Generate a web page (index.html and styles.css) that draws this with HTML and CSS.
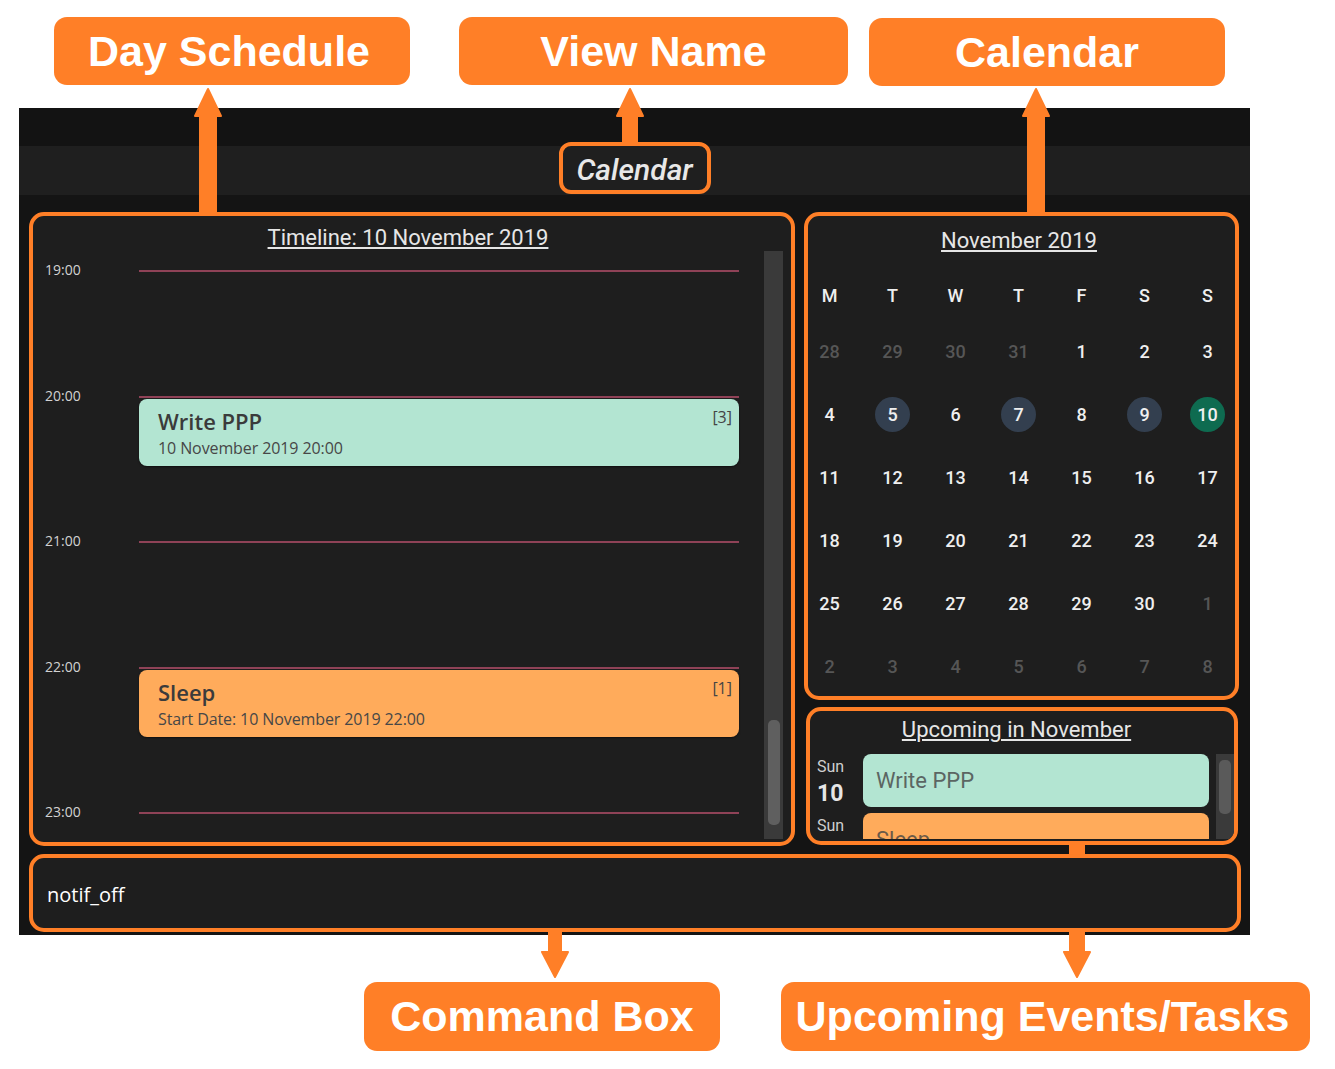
FILE: index.html
```html
<!DOCTYPE html>
<html lang="en">
<head>
<meta charset="utf-8">
<title>Calendar UI annotated</title>
<link rel="stylesheet" href="styles.css">
</head>
<body>
<div class="page">
  <div class="callouts callouts-top">
    <div class="callout c-day">Day Schedule</div>
    <div class="callout c-view">View Name</div>
    <div class="callout c-cal">Calendar</div>
  </div>

  <div class="app">
    <div class="menubar"></div>
    <div class="titlebar"><div class="viewname">Calendar</div></div>
    <div class="main">
      <section class="panel timeline-panel">
        <h2 class="panel-title tl-title">Timeline: 10 November 2019</h2>
        <div class="timeline-body">
          <div class="timeline">
            <div class="hour"><span class="hour-label">19:00</span><span class="hour-line"></span></div>
            <div class="hour after-empty"><span class="hour-label">20:00</span><span class="hour-line"></span></div>
            <div class="event mint">
              <div class="event-head"><span class="event-title">Write PPP</span><span class="event-tag">[3]</span></div>
              <div class="event-sub">10 November 2019 20:00</div>
            </div>
            <div class="hour after-card"><span class="hour-label">21:00</span><span class="hour-line"></span></div>
            <div class="hour after-empty"><span class="hour-label">22:00</span><span class="hour-line"></span></div>
            <div class="event peach">
              <div class="event-head"><span class="event-title">Sleep</span><span class="event-tag">[1]</span></div>
              <div class="event-sub">Start Date: 10 November 2019 22:00</div>
            </div>
            <div class="hour after-card"><span class="hour-label">23:00</span><span class="hour-line"></span></div>
          </div>
          <div class="scrollbar tl-scroll"><div class="thumb"></div></div>
        </div>
      </section>

      <div class="right-col">
        <section class="panel calendar-panel">
          <h2 class="panel-title cal-title">November 2019</h2>
          <div class="month-grid">
            <div class="wd">M</div><div class="wd">T</div><div class="wd">W</div><div class="wd">T</div><div class="wd">F</div><div class="wd">S</div><div class="wd">S</div>
            <div class="day muted">28</div><div class="day muted">29</div><div class="day muted">30</div><div class="day muted">31</div><div class="day">1</div><div class="day">2</div><div class="day">3</div>
            <div class="day">4</div><div class="day has-event">5</div><div class="day">6</div><div class="day has-event">7</div><div class="day">8</div><div class="day has-event">9</div><div class="day today">10</div>
            <div class="day">11</div><div class="day">12</div><div class="day">13</div><div class="day">14</div><div class="day">15</div><div class="day">16</div><div class="day">17</div>
            <div class="day">18</div><div class="day">19</div><div class="day">20</div><div class="day">21</div><div class="day">22</div><div class="day">23</div><div class="day">24</div>
            <div class="day">25</div><div class="day">26</div><div class="day">27</div><div class="day">28</div><div class="day">29</div><div class="day">30</div><div class="day muted">1</div>
            <div class="day muted">2</div><div class="day muted">3</div><div class="day muted">4</div><div class="day muted">5</div><div class="day muted">6</div><div class="day muted">7</div><div class="day muted">8</div>
          </div>
        </section>

        <section class="panel upcoming-panel">
          <h2 class="panel-title up-title">Upcoming in November</h2>
          <div class="up-body">
            <div class="up-list">
              <div class="up-item">
                <div class="up-date"><div class="up-dow">Sun</div><div class="up-num">10</div></div>
                <div class="up-card mint">Write PPP</div>
              </div>
              <div class="up-item">
                <div class="up-date"><div class="up-dow">Sun</div></div>
                <div class="up-card peach">Sleep</div>
              </div>
            </div>
            <div class="scrollbar up-scroll"><div class="thumb"></div></div>
          </div>
        </section>
      </div>
    </div>
    <div class="command">notif_off</div>
  </div>

  <div class="callouts callouts-bottom">
    <div class="callout c-cmd">Command Box</div>
    <div class="callout c-up">Upcoming Events/Tasks</div>
  </div>

  <svg class="arrows" width="1335" height="1069" viewBox="0 0 1335 1069" aria-hidden="true">
    <g fill="#ff7f27" stroke="#ff7f27" stroke-width="2" stroke-linejoin="round">
      <polygon points="208,89 221,116 216,116 216,214 200,214 200,116 195,116"/>
      <polygon points="630,89 643,116 637,116 637,143 623,143 623,116 617,116"/>
      <polygon points="1036,89 1049,116 1044,116 1044,214 1028,214 1028,116 1023,116"/>
      <polygon points="549,930 561,930 561,952 568,952 555,977 542,952 549,952"/>
      <rect x="1070" y="844" width="14" height="12"/>
      <polygon points="1070,930 1084,930 1084,952 1090,952 1077,977 1064,952 1070,952"/>
    </g>
  </svg>
</div>
</body>
</html>
```

FILE: styles.css
```css
html, body {
  margin: 0;
  padding: 0;
  background: #ffffff;
}

.page {
  position: relative;
  width: 1335px;
  height: 1069px;
  overflow: hidden;
}

/* ---------- callout labels ---------- */
.callouts {
  display: flex;
  align-items: flex-start;
}

.callouts-top {
  padding-top: 17px;
  height: 68px;
}

.callouts-bottom {
  margin-top: 47px;
}

.callout {
  box-sizing: border-box;
  height: 68px;
  background: #ff7f27;
  border-radius: 13px;
  color: #ffffff;
  font-family: "Liberation Sans", Arial, sans-serif;
  font-weight: 700;
  font-size: 43px;
  line-height: 68px;
  text-align: center;
  white-space: nowrap;
}

.c-day { margin-left: 54px; width: 356px; padding-right: 6px; }
.c-view { margin-left: 49px; width: 389px; }
.c-cal { margin-left: 21px; width: 356px; margin-top: 1px; }
.c-cmd { margin-left: 364px; width: 356px; height: 69px; line-height: 69px; }
.c-up { margin-left: 61px; width: 529px; height: 69px; line-height: 69px; padding-right: 6px; }

/* ---------- app window ---------- */
.app {
  margin-top: 23px;
  margin-left: 19px;
  width: 1231px;
  height: 827px;
  background: #141414;
  font-family: Roboto, "Noto Sans", sans-serif;
}

.menubar {
  height: 38px;
  background: #131313;
}

.titlebar {
  height: 49px;
  background: #1f1f1f;
  display: flex;
  justify-content: center;
  align-items: flex-start;
}

.viewname {
  box-sizing: border-box;
  margin-top: -4px;
  width: 152px;
  height: 52px;
  border: 4px solid #ff7f27;
  border-radius: 12px;
  display: flex;
  align-items: center;
  justify-content: center;
  font-family: Roboto, sans-serif;
  font-style: italic;
  font-weight: 500;
  font-size: 30px;
  color: #e8e8e8;
  padding-top: 3px;
}

.main {
  display: flex;
  gap: 9px;
  padding: 17px 0 0 10px;
}

.panel {
  box-sizing: border-box;
  border: 4px solid #ff7f27;
  border-radius: 15px;
  background: #1e1e1e;
  overflow: hidden;
}

.panel-title {
  margin: 0;
  font-family: Roboto, sans-serif;
  font-weight: 400;
  font-size: 22px;
  line-height: 25px;
  color: #e6e6e6;
  text-align: center;
  text-decoration: underline;
  text-decoration-thickness: 1.5px;
  text-underline-offset: 2px;
}

/* ---------- timeline ---------- */
.timeline-panel {
  width: 766px;
  height: 634px;
  padding-top: 9px;
  display: flex;
  flex-direction: column;
}

.tl-title { padding-right: 8px; }

.timeline-body {
  flex: 1;
  display: flex;
  margin-top: 1px;
  min-height: 0;
}

.timeline {
  flex: 1;
  padding: 19px 25px 0 12px;
  overflow: hidden;
}

.hour {
  display: flex;
  align-items: center;
  height: 2px;
}

.hour.after-empty { margin-top: 124px; }
.hour.after-card { margin-top: 75px; }

.hour-label {
  flex: 0 0 94px;
  font-family: "Open Sans", sans-serif;
  font-size: 14px;
  line-height: 18px;
  color: #d2d2d2;
  margin-top: -2px;
}

.hour-line {
  flex: 1;
  height: 2px;
  background: #8f4257;
}

.event {
  box-sizing: border-box;
  margin: 1px 0 0 94px;
  height: 67px;
  padding: 8px 7px 8px 19px;
  border-radius: 8px;
  box-shadow: 0 1px 2px rgba(0, 0, 0, 0.5);
  font-family: "Open Sans", sans-serif;
}

.mint { background: #b3e5d2; }
.peach { background: #ffab5b; }

.event-head {
  display: flex;
  justify-content: space-between;
  align-items: flex-start;
}

.event-title {
  font-size: 22px;
  font-weight: 600;
  line-height: 28px;
  color: #3b3b3b;
}

.event-tag {
  margin-top: 0;
  font-size: 16px;
  line-height: 20px;
  color: #444444;
}

.event-sub {
  margin-top: 3px;
  font-size: 16px;
  line-height: 20px;
  color: #474747;
  letter-spacing: -0.1px;
}

.scrollbar {
  background: #3a3a3a;
  flex-shrink: 0;
}

.thumb {
  background: #5f5f5f;
  border-radius: 5px;
}

.tl-scroll {
  width: 19px;
  margin: 0 8px 3px 0;
}

.tl-scroll .thumb {
  margin: 469px 0 0 4px;
  width: 12px;
  height: 105px;
}

/* ---------- right column ---------- */
.right-col {
  width: 435px;
  display: flex;
  flex-direction: column;
}

.calendar-panel {
  width: 435px;
  height: 488px;
  padding-top: 12px;
}

.cal-title { padding-right: 5px; }

.month-grid {
  margin-top: 17px;
  padding-left: 4px;
  display: grid;
  grid-template-columns: repeat(7, 35px);
  grid-template-rows: 50px repeat(6, 63px);
  column-gap: 28px;
  place-items: center;
}

.wd, .day {
  font-family: Roboto, sans-serif;
  font-weight: 500;
  font-size: 18px;
  color: #efefef;
}

.day {
  width: 35px;
  height: 35px;
  border-radius: 50%;
  display: flex;
  align-items: center;
  justify-content: center;
  line-height: 1;
}

.day.muted { color: #565656; }
.day.has-event { background: #333f4f; }
.day.today { background: #0e6b50; }

/* ---------- upcoming ---------- */
.upcoming-panel {
  width: 432px;
  height: 138px;
  margin: 7px 0 0 2px;
  padding-top: 6px;
}

.up-title { padding-right: 11px; }

.up-body {
  display: flex;
  margin-top: 12px;
  height: 85px;
}

.up-list {
  flex: 1;
  overflow: hidden;
  display: flex;
  flex-direction: column;
  gap: 6px;
}

.up-item {
  display: flex;
  flex-shrink: 0;
}

.up-date {
  box-sizing: border-box;
  width: 53px;
  padding: 3px 0 0 7px;
  flex-shrink: 0;
}

.up-dow {
  font-size: 16px;
  line-height: 19px;
  color: #cfcfcf;
}

.up-num {
  margin-top: 4px;
  font-size: 23px;
  font-weight: 700;
  line-height: 27px;
  color: #e6e6e6;
}

.up-card {
  flex: 1;
  height: 53px;
  box-sizing: border-box;
  border-radius: 8px;
  padding-left: 13px;
  display: flex;
  align-items: center;
  font-size: 22px;
  color: #5b6663;
}

.up-card.peach { color: #6b5a48; }

.up-scroll {
  width: 18px;
  margin-left: 7px;
}

.up-scroll .thumb {
  margin: 6px 0 0 3px;
  width: 12px;
  height: 54px;
  background: #5a5a5a;
}

/* ---------- command box ---------- */
.command {
  box-sizing: border-box;
  margin: 8px 0 0 10px;
  width: 1212px;
  height: 78px;
  border: 4px solid #ff7f27;
  border-radius: 15px;
  background: #1e1e1e;
  display: flex;
  align-items: center;
  padding: 2px 0 0 14px;
  font-family: "Open Sans", sans-serif;
  font-size: 20px;
  color: #ffffff;
}

/* ---------- arrows overlay ---------- */
.arrows {
  position: absolute;
  top: 0;
  left: 0;
  pointer-events: none;
}
```
